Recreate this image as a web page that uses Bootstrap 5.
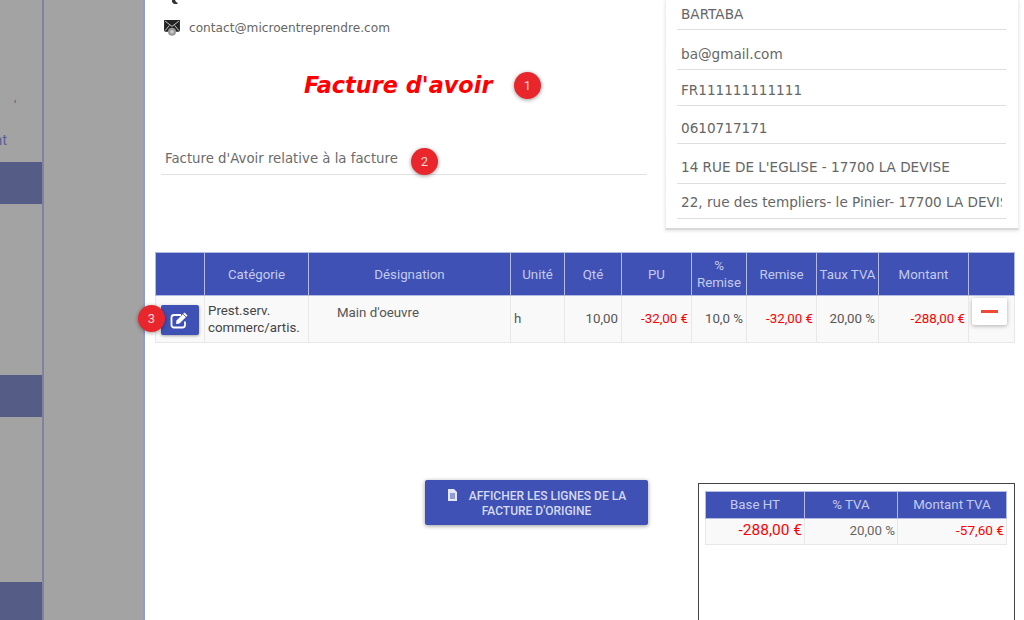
<!DOCTYPE html>
<html lang="fr">
<head>
  <meta charset="UTF-8">
  <title>Facture d'avoir</title>
  <link href="https://cdn.jsdelivr.net/npm/bootstrap@5.3.0/dist/css/bootstrap.min.css" rel="stylesheet">
  <style>
    html, body { height: 620px; overflow: hidden; }
    body { background: #fff; font-family: "Roboto", sans-serif; color: #555; }

    /* dimmed background */
    .side-rail { width: 44px; flex: none; background: #a3a3a3; border-right: 2px solid #7f83a0; height: 620px; overflow: hidden; color: #5c6194; }
    .rail-comma { height: 162px; padding: 89px 0 0 14px; font-size: 12px; line-height: 16px; }
    .rail-nt { display: block; margin: 26px 0 0 -28px; font-size: 15px; line-height: 18px; }
    .rail-band { height: 42px; background: #555c85; }
    .rail-gap1 { height: 171px; }
    .rail-gap2 { height: 165px; }
    .rail-band-last { height: 38px; background: #555c85; }
    .side-gutter { width: 99px; flex: none; background: #a3a3a3; height: 620px; }

    .sheet { flex: 1; min-width: 0; background: #fff; border-left: 2px solid #8c9bd0; height: 620px; position: relative; padding-left: 9px; }

    /* head of the invoice */
    .head-left { width: 493px; flex: none; padding-left: 7px; margin-right: 18px; height: 229px; }
    .phone-stub { height: 19px; padding-left: 10px; }
    .mail-line { display: flex; align-items: center; gap: 8px; height: 18px; padding-left: 2px; font-family: "DejaVu Sans", sans-serif; font-size: 12.15px; color: #666; }
    .avoir-title { font-family: "DejaVu Sans", sans-serif; font-weight: 700; font-style: italic; font-size: 22.4px; color: #f00; margin: 0; padding: 33px 0 0 143px; line-height: 30px; height: 66px; }
    .relative-line { margin-top: 42px; height: 30px; padding: 0 0 0 4px; border-bottom: 1px solid #e2e2e2; font-family: "DejaVu Sans", sans-serif; font-size: 13.3px; line-height: 28px; color: #6b6b6b; }

    .client-box { width: 354px; flex: none; height: 230px; padding: 0 12px 0 11px; background: #fff; border: 1px solid #efefef; border-top: 0; border-bottom: 2px solid #d9d9d9; box-shadow: 0 1px 3px rgba(0,0,0,.12); font-family: "DejaVu Sans", sans-serif; font-size: 13.6px; color: #666; }
    .client-line { border-bottom: 1px solid #dedede; padding: 0 4px; white-space: nowrap; overflow: hidden; }
    .client-clip { overflow: hidden; }
    .cl-a { height: 30px; line-height: 29px; }
    .cl-b { height: 40px; line-height: 49px; }
    .cl-c { height: 36px; line-height: 41px; }
    .cl-d { height: 38px; line-height: 45px; }
    .cl-e { height: 40px; line-height: 47px; }
    .cl-f { height: 35px; line-height: 37px; }

    /* tables */
    .invoice-table { table-layout: fixed; width: 859px; margin: 22px 0 0 1px; border-collapse: collapse; font-size: 13.3px; --bs-table-bg: transparent; }
    .invoice-table th { background: #3f51b5; color: #c3cbec; font-weight: 400; text-align: center; vertical-align: middle; height: 43px; padding: 0; border: 1px solid #b3bbe2; line-height: 17px; }
    .invoice-table td { background: #f9f9f9; color: #555; height: 47px; padding: 0 3px 1px; border: 1px solid #e8e8e8; vertical-align: middle; line-height: 17px; }
    .amount-neg { color: #f00 !important; text-align: right; }
    .num-cell { text-align: right; }
    .cat-cell { color: #444 !important; padding-bottom: 0 !important; }
    .des-cell { vertical-align: top !important; padding: 8px 0 0 28px !important; }

    .btn-edit-line { width: 38px; height: 30px; padding: 0; display: flex; align-items: center; justify-content: center; margin: 2px 0 0 5px; background: #3f51b5; border: 0; border-radius: 2px; box-shadow: 0 1px 3px rgba(0,0,0,.35); }
    .btn-del-line { width: 35px; height: 27px; padding: 0; display: flex; align-items: center; justify-content: center; margin: -16px 0 0 3px; background: #fff; border: 0; border-radius: 2px; box-shadow: 0 1px 4px rgba(0,0,0,.3); }
    .btn-del-line span { display: block; width: 17px; height: 3px; background: #ee4a36; }

    .lower-area { margin-top: 137px; }
    .btn-origin { width: 223px; height: 45px; margin: 0 50px 0 271px; padding: 2px 6px 0; flex: none; background: #3f51b5; border: 0; border-radius: 2px; color: #d5daf1; font-size: 12px; font-weight: 500; line-height: 15px; box-shadow: 0 1px 4px rgba(0,0,0,.4); }
    .btn-origin svg { vertical-align: -1px; margin-right: 8px; }
    .tva-box { width: 317px; height: 137px; margin-top: 3px; padding: 7px 7px 0 6px; flex: none; border: 1px solid #444; border-bottom: 0; }
    .tva-table { table-layout: fixed; width: 301px; border-collapse: collapse; font-size: 13.3px; --bs-table-bg: transparent; margin: 0; }
    .tva-table th { background: #3f51b5; color: #c3cbec; font-weight: 400; text-align: center; vertical-align: middle; height: 27px; padding: 0; border: 1px solid #b3bbe2; }
    .tva-table td { background: #f9f9f9; color: #666; height: 23px; padding: 0 2px 2px; border: 1px solid #e8e8e8; text-align: right; vertical-align: middle; }
    .amount-big { color: #f00 !important; font-size: 15.500px; }
    .amount-small { font-size: 13.6px; }

    /* numbered markers on top of the screenshot */
    .step-dot { position: absolute; width: 27px; height: 27px; border-radius: 50%; background: #e8262c; color: #fbd5d5; font-size: 13px; line-height: 27px; text-align: center; box-shadow: 0 1px 4px rgba(0,0,0,.4); }
    .step-1 { left: 369px; top: 72px; }
    .step-2 { left: 266px; top: 148px; }
    .step-3 { left: -7px; top: 305px; }
  </style>
</head>
<body>
<div class="d-flex">
  <div class="side-rail">
    <div class="rail-comma">,<span class="rail-nt">ent</span></div>
    <div class="rail-band"></div>
    <div class="rail-gap1"></div>
    <div class="rail-band"></div>
    <div class="rail-gap2"></div>
    <div class="rail-band-last"></div>
  </div>
  <div class="side-gutter"></div>

  <div class="sheet">
    <div class="d-flex">
      <div class="head-left">
        <div class="phone-stub">
          <svg width="8" height="4" viewBox="0 0 8 4" class="d-block"><path d="M1 0h3l1 2 2 1-1 1H3L1 2z" fill="#333"/></svg>
        </div>
        <div class="mail-line">
          <svg width="18" height="18" viewBox="0 0 17 17">
            <path d="M1 1h15v10l-1 1H2l-1-1z" fill="#222"/>
            <path d="M2 2l6.500 5L15 2M2 11l4-5M15 11l-4-5" fill="none" stroke="#ddd" stroke-width=".8"/>
            <circle cx="8.500" cy="12" r="3.800" fill="#999"/>
            <circle cx="8.500" cy="12" r="1.700" fill="#ccc"/>
          </svg>
          <span>contact@microentreprendre.com</span>
        </div>
        <h1 class="avoir-title">Facture d'avoir</h1>
        <div class="relative-line">Facture d'Avoir relative à la facture</div>
      </div>
      <div class="client-box">
        <div class="client-line cl-a">BARTABA</div>
        <div class="client-line cl-b">ba@gmail.com</div>
        <div class="client-line cl-c">FR111111111111</div>
        <div class="client-line cl-d">0610717171</div>
        <div class="client-line cl-e">14 RUE DE L'EGLISE - 17700 LA DEVISE</div>
        <div class="client-line cl-f"><div class="client-clip">22, rue des templiers- le Pinier- 17700 LA DEVISE</div></div>
      </div>
    </div>

    <table class="table invoice-table">
      <colgroup>
        <col style="width:49px"><col style="width:104px"><col style="width:202px"><col style="width:54px"><col style="width:57px"><col style="width:70px"><col style="width:55px"><col style="width:70px"><col style="width:62px"><col style="width:90px"><col style="width:46px">
      </colgroup>
      <thead>
        <tr>
          <th></th><th>Catégorie</th><th>Désignation</th><th>Unité</th><th>Qté</th><th>PU</th><th>%<br>Remise</th><th>Remise</th><th>Taux TVA</th><th>Montant</th><th></th>
        </tr>
      </thead>
      <tbody>
        <tr>
          <td class="p-0">
            <button type="button" class="btn btn-edit-line" aria-label="Modifier">
              <svg width="20" height="18" viewBox="0 0 20 18">
                <path d="M15 10.500V14a2.500 2.500 0 0 1-2.500 2.500H4A2.500 2.500 0 0 1 1.500 14V6.500A2.500 2.500 0 0 1 4 4h7" fill="none" stroke="#fff" stroke-width="1.800"/>
                <path d="M6.500 9.500L14.500 1.500l3 3-8 8-3.500.5z" fill="#fff"/>
                <path d="M13 3l3 3" stroke="#3f51b5" stroke-width=".8"/>
              </svg>
            </button>
          </td>
          <td class="cat-cell">Prest.serv. commerc/artis.</td>
          <td class="des-cell">Main d'oeuvre</td>
          <td>h</td>
          <td class="num-cell">10,00</td>
          <td class="amount-neg">-32,00 €</td>
          <td class="num-cell">10,0 %</td>
          <td class="amount-neg">-32,00 €</td>
          <td class="num-cell">20,00 %</td>
          <td class="amount-neg">-288,00 €</td>
          <td class="p-0"><button type="button" class="btn btn-del-line" aria-label="Supprimer"><span></span></button></td>
        </tr>
      </tbody>
    </table>

    <div class="d-flex align-items-start lower-area">
      <button type="button" class="btn btn-origin text-uppercase">
        <svg width="11" height="12" viewBox="0 0 11 12"><path d="M1 0h6l3 3v9H1z" fill="#e3e6f5"/><path d="M3 5h5M3 7h5M3 9h5" stroke="#3f51b5"/></svg>
        Afficher les lignes de la facture d'origine
      </button>
      <div class="tva-box">
        <table class="table tva-table">
          <colgroup><col style="width:99px"><col style="width:93px"><col style="width:109px"></colgroup>
          <thead><tr><th>Base HT</th><th>% TVA</th><th>Montant TVA</th></tr></thead>
          <tbody><tr><td class="amount-big">-288,00 €</td><td>20,00 %</td><td class="amount-neg amount-small">-57,60 €</td></tr></tbody>
        </table>
      </div>
    </div>

    <span class="step-dot step-1">1</span>
    <span class="step-dot step-2">2</span>
    <span class="step-dot step-3">3</span>
  </div>
</div>
<script src="https://cdn.jsdelivr.net/npm/bootstrap@5.3.0/dist/js/bootstrap.bundle.min.js"></script>
</body>
</html>
